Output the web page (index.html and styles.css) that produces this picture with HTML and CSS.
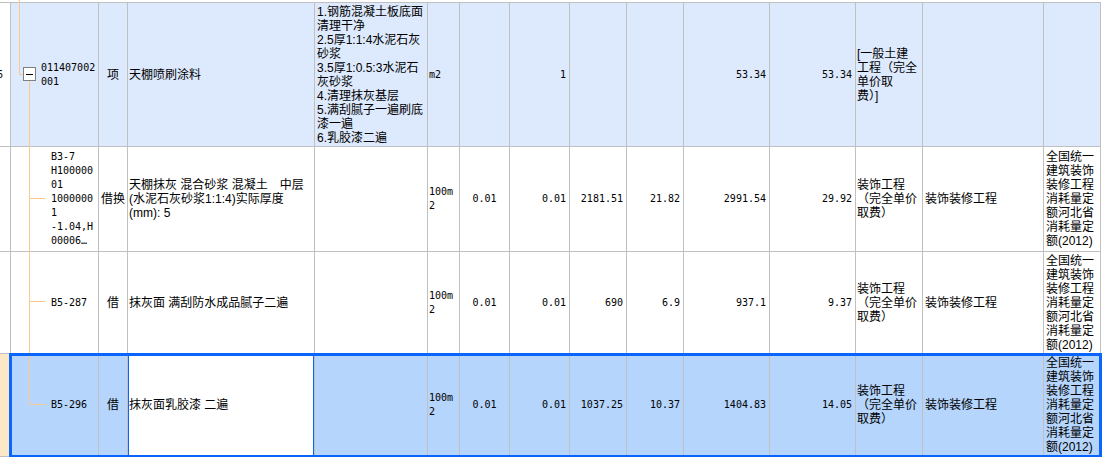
FILE: index.html
```html
<!DOCTYPE html>
<html lang="zh-CN">
<head>
<meta charset="utf-8">
<title>分部分项</title>
<link rel="stylesheet" href="styles.css">
</head>
<body>
<div class="sheet">
  <div class="row r1">
    <div class="c c0 m"><span>6</span></div>
    <div class="c code m">011407002<br>001</div>
    <div class="c type">项</div>
    <div class="c name">天棚喷刷涂料</div>
    <div class="c feat">1.钢筋混凝土板底面<br>清理干净<br>2.5厚1:1:4水泥石灰<br>砂浆<br>3.5厚1:0.5:3水泥石<br>灰砂浆<br>4.清理抹灰基层<br>5.满刮腻子一遍刷底<br>漆一遍<br>6.乳胶漆二遍</div>
    <div class="c unit m">m2</div>
    <div class="c ctr m"></div>
    <div class="c num m">1</div>
    <div class="c num m"></div>
    <div class="c num m"></div>
    <div class="c num m">53.34</div>
    <div class="c num m">53.34</div>
    <div class="c fee">[一般土建<br>工程（完全<br>单价取<br>费）]</div>
    <div class="c major"></div>
    <div class="c lib"></div>
  </div>
  <div class="row r2">
    <div class="c c0"></div>
    <div class="c code m">B3-7<br>H100000<br>01<br>1000000<br>1<br>-1.04,H<br>00006…</div>
    <div class="c type">借换</div>
    <div class="c name">天棚抹灰 混合砂浆 混凝土　中层<br>(水泥石灰砂浆1:1:4)实际厚度<br>(mm): 5</div>
    <div class="c feat"></div>
    <div class="c unit m">100m<br>2</div>
    <div class="c ctr m">0.01</div>
    <div class="c num m">0.01</div>
    <div class="c num m">2181.51</div>
    <div class="c num m">21.82</div>
    <div class="c num m">2991.54</div>
    <div class="c num m">29.92</div>
    <div class="c fee">装饰工程<br>（完全单价<br>取费）</div>
    <div class="c major">装饰装修工程</div>
    <div class="c lib">全国统一<br>建筑装饰<br>装修工程<br>消耗量定<br>额河北省<br>消耗量定<br>额(2012)</div>
  </div>
  <div class="row r3">
    <div class="c c0"></div>
    <div class="c code m">B5-287</div>
    <div class="c type">借</div>
    <div class="c name">抹灰面 满刮防水成品腻子二遍</div>
    <div class="c feat"></div>
    <div class="c unit m">100m<br>2</div>
    <div class="c ctr m">0.01</div>
    <div class="c num m">0.01</div>
    <div class="c num m">690</div>
    <div class="c num m">6.9</div>
    <div class="c num m">937.1</div>
    <div class="c num m">9.37</div>
    <div class="c fee">装饰工程<br>（完全单价<br>取费）</div>
    <div class="c major">装饰装修工程</div>
    <div class="c lib">全国统一<br>建筑装饰<br>装修工程<br>消耗量定<br>额河北省<br>消耗量定<br>额(2012)</div>
  </div>
  <div class="row r4">
    <div class="c c0"></div>
    <div class="c code m">B5-296</div>
    <div class="c type">借</div>
    <div class="c name cur">抹灰面乳胶漆 二遍</div>
    <div class="c feat"></div>
    <div class="c unit m">100m<br>2</div>
    <div class="c ctr m">0.01</div>
    <div class="c num m">0.01</div>
    <div class="c num m">1037.25</div>
    <div class="c num m">10.37</div>
    <div class="c num m">1404.83</div>
    <div class="c num m">14.05</div>
    <div class="c fee">装饰工程<br>（完全单价<br>取费）</div>
    <div class="c major">装饰装修工程</div>
    <div class="c lib">全国统一<br>建筑装饰<br>装修工程<br>消耗量定<br>额河北省<br>消耗量定<br>额(2012)</div>
  </div>
  <svg class="tree" width="50" height="459" viewBox="0 0 50 459">
    <g stroke="#fcc88d" stroke-width="1" fill="none">
      <line x1="19.5" y1="0" x2="19.5" y2="75"/>
      <line x1="19" y1="74.5" x2="23" y2="74.5"/>
      <line x1="29.5" y1="80" x2="29.5" y2="405"/>
      <line x1="29" y1="198.5" x2="45" y2="198.5"/>
      <line x1="29" y1="301.5" x2="45" y2="301.5"/>
      <line x1="29" y1="404.5" x2="45" y2="404.5"/>
    </g>
    <rect x="23.5" y="67.5" width="12" height="13" fill="#fff" stroke="#808080"/>
    <line x1="26" y1="74.5" x2="33" y2="74.5" stroke="#000"/>
  </svg>
</div>
</body>
</html>
```
FILE: styles.css
```css
html, body {
  margin: 0;
  padding: 0;
  background: #fff;
}
body {
  font-family: "Liberation Sans", "Noto Sans CJK SC", sans-serif;
  font-size: 12px;
  line-height: 14px;
  color: #000;
}
.sheet {
  position: relative;
  margin-top: 2px;
  width: 1101px;
  border-top: 1px solid #c0c0c0;
}
.row {
  display: grid;
  grid-template-columns: 11px 88px 29px 187px 113px 32px 50px 60px 57px 57px 86px 86px 67px 121px 57px;
}
.r1 { height: 144px; background: #dde9fc; }
.r2 { height: 105px; background: #fff; }
.r3 { height: 102px; background: #fff; }
.r4 { height: 103px; background: #b5d5fd; position: relative; }
.r4::after {
  content: "";
  position: absolute;
  left: 9px;
  top: -1px;
  right: -1px;
  bottom: -1px;
  border: 3px solid #0a66fb;
  pointer-events: none;
  z-index: 3;
}
.c {
  box-sizing: border-box;
  border-right: 1px solid #c0c0c0;
  border-bottom: 1px solid #c0c0c0;
  display: flex;
  align-items: center;
  padding: 0 2px;
  overflow: hidden;
  white-space: nowrap;
  min-width: 0;
}
.m {
  font-family: "DejaVu Sans Mono", monospace;
  font-size: 10px;
}
.c0 {
  background: #fff;
  justify-content: flex-end;
  padding: 0 7px 0 0;
}
.r4 .c0 { background: #fde7c9; }
.code { padding-left: 40px; }
.r1 .code { padding-left: 30px; }
.type { justify-content: center; padding: 0; }
.name { padding-left: 1px; }
.feat { padding-left: 2px; }
.unit { padding-left: 1px; }
.ctr { justify-content: center; }
.num { justify-content: flex-end; padding-right: 3px; }
.fee { padding-left: 1px; }
.major { padding-left: 2px; }
.lib { padding-left: 2px; }
.cur {
  position: relative;
  background: #fff;
}
.cur::before {
  content: "";
  position: absolute;
  left: -1px;
  right: -1px;
  top: 0;
  bottom: 0;
  border-left: 2px solid #0a66fb;
  border-right: 2px solid #0a66fb;
}
.tree {
  position: absolute;
  left: 0;
  top: -3px;
  z-index: 2;
  pointer-events: none;
}
```
